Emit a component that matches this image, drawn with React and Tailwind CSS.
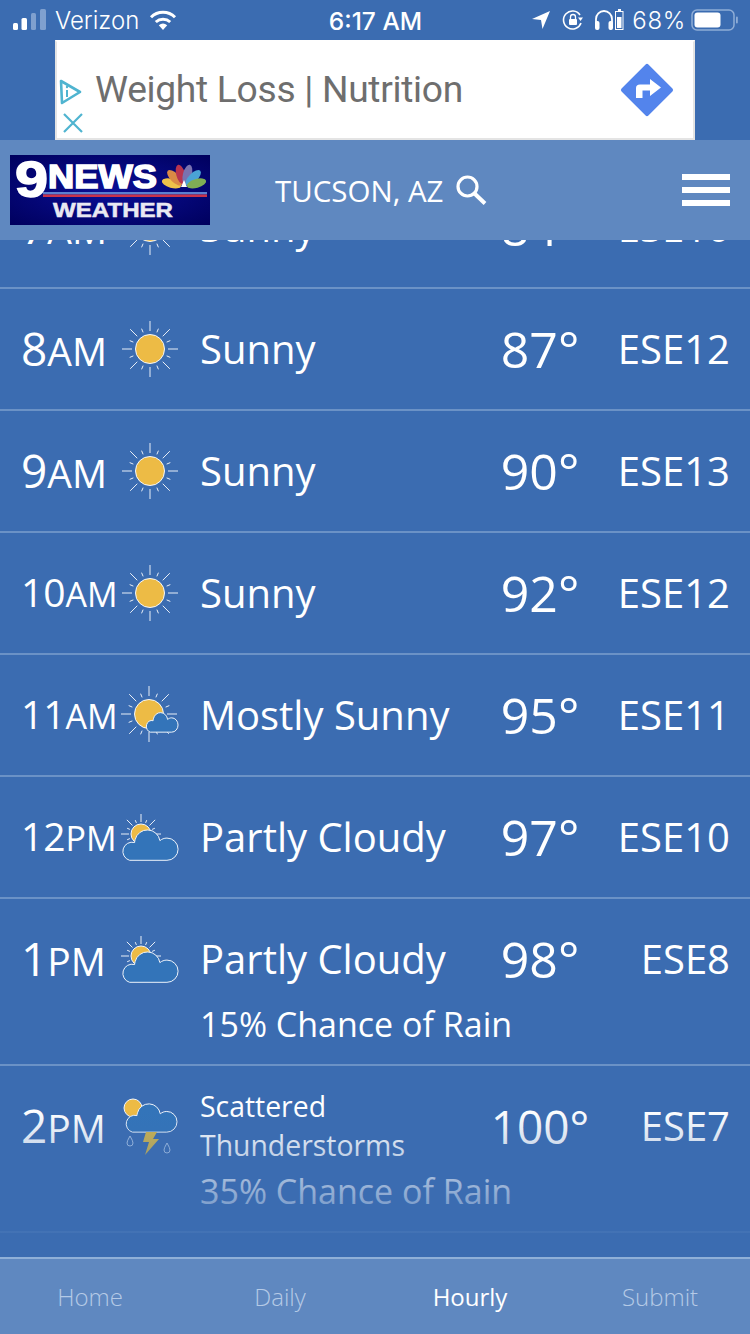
import React from 'react'

const HOURS = [
  { num: '7', unit: 'AM', icon: 'sun', cond: 'Sunny', temp: '84°', wind: 'ESE10' },
  { num: '8', unit: 'AM', icon: 'sun', cond: 'Sunny', temp: '87°', wind: 'ESE12' },
  { num: '9', unit: 'AM', icon: 'sun', cond: 'Sunny', temp: '90°', wind: 'ESE13' },
  { num: '10', unit: 'AM', icon: 'sun', cond: 'Sunny', temp: '92°', wind: 'ESE12' },
  { num: '11', unit: 'AM', icon: 'mostly', cond: 'Mostly Sunny', temp: '95°', wind: 'ESE11' },
  { num: '12', unit: 'PM', icon: 'partly', cond: 'Partly Cloudy', temp: '97°', wind: 'ESE10' },
  { num: '1', unit: 'PM', icon: 'partly', cond: 'Partly Cloudy', temp: '98°', wind: 'ESE8', rain: '15% Chance of Rain' },
  { num: '2', unit: 'PM', icon: 'storm', cond: ['Scattered', 'Thunderstorms'], temp: '100°', wind: 'ESE7', rain: '35% Chance of Rain' },
]

const TABS = ['Home', 'Daily', 'Hourly', 'Submit']

function Rays({ cx, cy, r, long, short }) {
  const rays = []
  for (let i = 0; i < 16; i++) {
    const a = (i * Math.PI) / 8
    const isLong = i % 2 === 0
    const r2 = r + (isLong ? long : short)
    rays.push(
      <line
        key={i}
        x1={cx + r * Math.cos(a)}
        y1={cy + r * Math.sin(a)}
        x2={cx + r2 * Math.cos(a)}
        y2={cy + r2 * Math.sin(a)}
        stroke="#e8eef7"
        strokeWidth="1"
      />,
    )
  }
  return <g>{rays}</g>
}

function Cloud({ x, y, scale, scaleY }) {
  return (
    <path
      transform={`translate(${x} ${y}) scale(${scale} ${scaleY || scale})`}
      d="M9 31 H46 A11 11 0 0 0 46 9 C43 9 41 10 39 11.5 A12.5 12.5 0 0 0 14.5 10.5 Q14 12 14 13.4 A9 9 0 0 0 9 31 Z"
      fill="#3374b9"
      stroke="#eef3fa"
      strokeWidth="1"
      vectorEffect="non-scaling-stroke"
    />
  )
}

function WeatherIcon({ type }) {
  return (
    <svg viewBox="0 0 60 60" className="w-[60px] h-[60px] mt-[2px] shrink-0">
      {type === 'sun' && (
        <>
          <Rays cx={30} cy={29} r={18} long={10} short={4} />
          <circle cx="30" cy="29" r="14.5" fill="#edbb45" stroke="#f4f7fb" strokeWidth="1" />
        </>
      )}
      {type === 'mostly' && (
        <>
          <Rays cx={29} cy={28} r={18} long={10} short={4} />
          <circle cx="29" cy="28" r="14.5" fill="#edbb45" stroke="#f4f7fb" strokeWidth="1" />
          <Cloud x={25} y={26} scale={0.58} scaleY={0.65} />
        </>
      )}
      {type === 'partly' && (
        <>
          <Rays cx={21} cy={26} r={12} long={8} short={3} />
          <circle cx="21" cy="26" r="10" fill="#edbb45" stroke="#f4f7fb" strokeWidth="1" />
          <Cloud x={0.5} y={21} scale={1.01} />
        </>
      )}
      {type === 'storm' && (
        <>
          <circle cx="13" cy="11" r="9" fill="#edbb45" stroke="#f4f7fb" strokeWidth="1" />
          <Cloud x={4} y={6} scale={0.93} scaleY={0.94} />
          <path d="M26 35 H37 L33 42 H39 L25 58 L29 45 H23 Z" fill="#d7b748" />
          <path d="M10 39 Q13 44 13 46 A3 3 0 0 1 7 46 Q7 44 10 39 Z" fill="none" stroke="#a9c3e4" strokeWidth="1" />
          <path d="M47 46 Q50 51 50 53 A3 3 0 0 1 44 53 Q44 51 47 46 Z" fill="none" stroke="#a9c3e4" strokeWidth="1" />
        </>
      )}
    </svg>
  )
}

function HourRow({ hour }) {
  const big = hour.num.length === 1
  return (
    <div className={`border-b-2 border-[#6b92c6] pt-[16px] pl-[21px] pr-[20px] ${hour.rain ? 'pb-[17px]' : 'pb-[16px]'}`}>
      <div className="flex items-center h-[88px]">
        <div className="w-[99px] -mt-[2px] whitespace-nowrap">
          <span className={big ? 'text-[46px]' : 'text-[39px]'}>{hour.num}</span>
          <span className={big ? 'text-[39px]' : 'text-[34px]'}>{hour.unit}</span>
        </div>
        <WeatherIcon type={hour.icon} />
        <div className="ml-[20px] w-[290px]">
          {Array.isArray(hour.cond) ? (
            hour.cond.map((line) => (
              <div key={line} className="text-[28.4px] leading-[39px]">{line}</div>
            ))
          ) : (
            <div className="text-[40px]">{hour.cond}</div>
          )}
        </div>
        <div className={`w-[100px] text-center ${hour.temp.length > 3 ? 'text-[46px]' : 'text-[50px]'}`}>{hour.temp}</div>
        <div className="flex-1 text-right text-[40px] whitespace-nowrap">{hour.wind}</div>
      </div>
      {hour.rain && (
        <div className="ml-[180px] h-[44px] leading-[42px] text-[34px] -translate-x-px">{hour.rain}</div>
      )}
    </div>
  )
}

function StatusBar() {
  return (
    <div className="h-[40px] grid grid-cols-[1fr_auto_1fr] items-center pl-[13px] pr-[12px] text-white text-[24px] font-['Inter',sans-serif]">
      <div className="flex items-center">
        <svg width="33" height="22" viewBox="0 0 33 22" className="shrink-0">
          <rect x="0" y="14" width="5" height="7" rx="1.5" fill="#fff" />
          <rect x="8.5" y="9" width="5.5" height="12" rx="1.5" fill="#fff" />
          <rect x="18" y="4" width="5" height="17" rx="1.5" fill="#7fa0cf" />
          <rect x="27" y="0" width="6" height="21" rx="1.5" fill="#7fa0cf" />
        </svg>
        <span className="ml-[9px] mt-[2px] font-light">Verizon</span>
        <svg width="30" height="22" viewBox="0 0 30 22" className="ml-[9px] shrink-0">
          <path d="M15 21 L10.8 16.2 A6.5 6.5 0 0 1 19.2 16.2 Z" fill="#fff" />
          <path d="M7.8 13 A10.8 10.8 0 0 1 22.2 13" fill="none" stroke="#fff" strokeWidth="3" />
          <path d="M3 8.2 A17 17 0 0 1 27 8.2" fill="none" stroke="#fff" strokeWidth="3" />
        </svg>
      </div>
      <div className="font-medium text-[24.5px] mt-[2px]">6:17 AM</div>
      <div className="flex items-center justify-end">
        <svg width="18" height="18" viewBox="0 0 18 18" className="shrink-0">
          <path d="M18 0 L0 8 L9 9 L10.5 18 Z" fill="#fff" />
        </svg>
        <svg width="22" height="22" viewBox="0 0 22 22" className="ml-[12px] shrink-0">
          <path d="M19 14 A9 9 0 1 1 18 6" fill="none" stroke="#fff" strokeWidth="1.6" />
          <path d="M16 8.5 H21 L18.5 12 Z" fill="#fff" />
          <rect x="7" y="10" width="8" height="6" rx="1" fill="#fff" />
          <path d="M8.5 10 V8 A2.5 2.5 0 0 1 13.5 8 V10" fill="none" stroke="#fff" strokeWidth="1.3" />
        </svg>
        <svg width="20" height="22" viewBox="0 0 20 22" className="ml-[10px] shrink-0">
          <path d="M2 15 V10 A8 8 0 0 1 18 10 V15" fill="none" stroke="#fff" strokeWidth="1.8" />
          <rect x="1" y="12" width="4.5" height="9" rx="2" fill="#fff" />
          <rect x="14.5" y="12" width="4.5" height="9" rx="2" fill="#fff" />
        </svg>
        <svg width="9" height="22" viewBox="0 0 9 22" className="ml-[1px] shrink-0">
          <rect x="3" y="0" width="3" height="2" fill="#fff" />
          <rect x="0.5" y="2.5" width="7.5" height="18" fill="none" stroke="#fff" strokeWidth="1" />
          <rect x="2" y="8" width="4.5" height="11" fill="#fff" />
        </svg>
        <span className="ml-[8px] mt-[2px] font-light text-[24px] tracking-[0.7px]">68%</span>
        <svg width="47" height="22" viewBox="0 0 47 22" className="ml-[5px] shrink-0">
          <rect x="1" y="1" width="42" height="20" rx="5" fill="none" stroke="#8fadd6" strokeWidth="1.5" />
          <rect x="3.5" y="3.5" width="26" height="15" rx="3" fill="#fff" />
          <rect x="45" y="7.5" width="1.8" height="7" rx="0.9" fill="#8fadd6" />
        </svg>
      </div>
    </div>
  )
}

function AdBanner() {
  return (
    <div className="mx-[55px] h-[100px] bg-white border-2 border-[#e4e4e4] border-t-white flex items-center shrink-0">
      <div className="w-[38px] self-end pb-[4px] flex flex-col items-start">
        <svg width="26" height="28" viewBox="0 0 26 28" className="shrink-0">
          <path d="M4 3 L23 14 L5 25 Z" fill="none" stroke="#4fb4d0" strokeWidth="2.6" strokeLinejoin="round" />
          <path d="M10 12 V19" stroke="#4fb4d0" strokeWidth="2" />
          <circle cx="10" cy="9" r="1.2" fill="#4fb4d0" />
        </svg>
        <svg width="22" height="22" viewBox="0 0 22 22" className="ml-[5px] mt-[6px] shrink-0">
          <path d="M2 2 L20 20 M20 2 L2 20" stroke="#4fb4d0" strokeWidth="2.2" />
        </svg>
      </div>
      <div className="flex-1 text-[37.2px] text-[#6e6e6e] font-['Roboto',sans-serif] tracking-[-0.3px]">
        Weight Loss | Nutrition
      </div>
      <svg width="56" height="56" viewBox="0 0 56 56" className="mr-[18px] shrink-0">
        <rect x="9" y="9" width="38" height="38" rx="2" transform="rotate(45 28 28)" fill="#5384ec" />
        <path d="M17 36 V26 Q17 22.5 21 22.5 H31 V17 L42 25.5 L31 34 V28.5 H23.5 V36 Z" fill="#fff" />
      </svg>
    </div>
  )
}

function Logo() {
  const feathers = [
    { a: -74, c: '#eec24a' },
    { a: -45, c: '#d98a45' },
    { a: -15, c: '#b8344f' },
    { a: 15, c: '#7a72b0' },
    { a: 45, c: '#4aa3d6' },
    { a: 74, c: '#7fae55' },
  ]
  return (
    <svg width="200" height="70" viewBox="0 0 200 70" className="shrink-0">
      <defs>
        <radialGradient id="navy" cx="50%" cy="50%" r="70%">
          <stop offset="0%" stopColor="#0a0f96" />
          <stop offset="100%" stopColor="#00005e" />
        </radialGradient>
      </defs>
      <rect width="200" height="70" fill="url(#navy)" />
      <text x="5" y="42" fontFamily="Liberation Sans, sans-serif" fontWeight="700" fontSize="50" fill="#fff" stroke="#fff" strokeWidth="1.5" textLength="33" lengthAdjust="spacingAndGlyphs">9</text>
      <text x="38" y="33" fontFamily="Liberation Sans, sans-serif" fontWeight="700" fontSize="34" fill="#fff" stroke="#fff" strokeWidth="1.6" textLength="109" lengthAdjust="spacingAndGlyphs">NEWS</text>
      <g transform="translate(174 32)">
        {feathers.map((f) => (
          <ellipse key={f.a} cx="0" cy="-13" rx="4.4" ry="10" fill={f.c} transform={`rotate(${f.a})`} />
        ))}
        <path d="M-3 0 L0 -7 L3 0 Z" fill="#fff" />
      </g>
      <rect x="33" y="37" width="164" height="2.5" fill="#5a7fd0" />
      <rect x="33" y="39.5" width="164" height="2.5" fill="#c9324a" />
      <text x="43" y="62" fontFamily="Liberation Sans, sans-serif" fontWeight="700" fontSize="20" fill="#e9e9f2" stroke="#e9e9f2" strokeWidth="0.5" textLength="120" lengthAdjust="spacingAndGlyphs">WEATHER</text>
    </svg>
  )
}

function Header() {
  return (
    <div className="relative z-10 h-[100px] bg-[#5f88c0] flex items-center pl-[10px] pr-[20px] shrink-0">
      <Logo />
      <div className="ml-[65px] mt-[2px] text-[29.5px] whitespace-nowrap">TUCSON, AZ</div>
      <svg width="32" height="32" viewBox="0 0 32 32" className="ml-[11px] shrink-0">
        <circle cx="12.5" cy="12.5" r="9.5" fill="none" stroke="#fff" strokeWidth="3.2" />
        <path d="M19.5 19.5 L30 29.5" stroke="#fff" strokeWidth="4" />
      </svg>
      <div className="ml-auto w-[48px] flex flex-col gap-[7px]">
        <div className="h-[6px] bg-white" />
        <div className="h-[6px] bg-white" />
        <div className="h-[6px] bg-white" />
      </div>
    </div>
  )
}

export default function App() {
  return (
    <div className="w-[750px] h-[1334px] overflow-hidden bg-[#3b6cb1] text-white flex flex-col font-['Open_Sans',sans-serif]">
      <StatusBar />
      <AdBanner />
      <Header />
      <div className="relative flex-1 min-h-0 overflow-hidden">
        <div className="-mt-[73px]">
          {HOURS.map((hour) => (
            <HourRow key={hour.num + hour.unit} hour={hour} />
          ))}
        </div>
        <div className="absolute inset-x-0 bottom-0 h-[147px] bg-gradient-to-b from-[#3b6cb100] to-[#3b6cb1]" />
      </div>
      <div className="h-[77px] shrink-0 bg-[#5f88c0] border-t-2 border-[#8fb0d8] overflow-hidden">
        <div className="-ml-[5px] w-[760px] h-full grid grid-cols-4 items-center text-center text-[24px] font-light">
          {TABS.map((tab) => (
            <div key={tab} className={tab === 'Hourly' ? 'text-white font-normal' : 'text-[#b5cae6]'}>
              {tab}
            </div>
          ))}
        </div>
      </div>
    </div>
  )
}
